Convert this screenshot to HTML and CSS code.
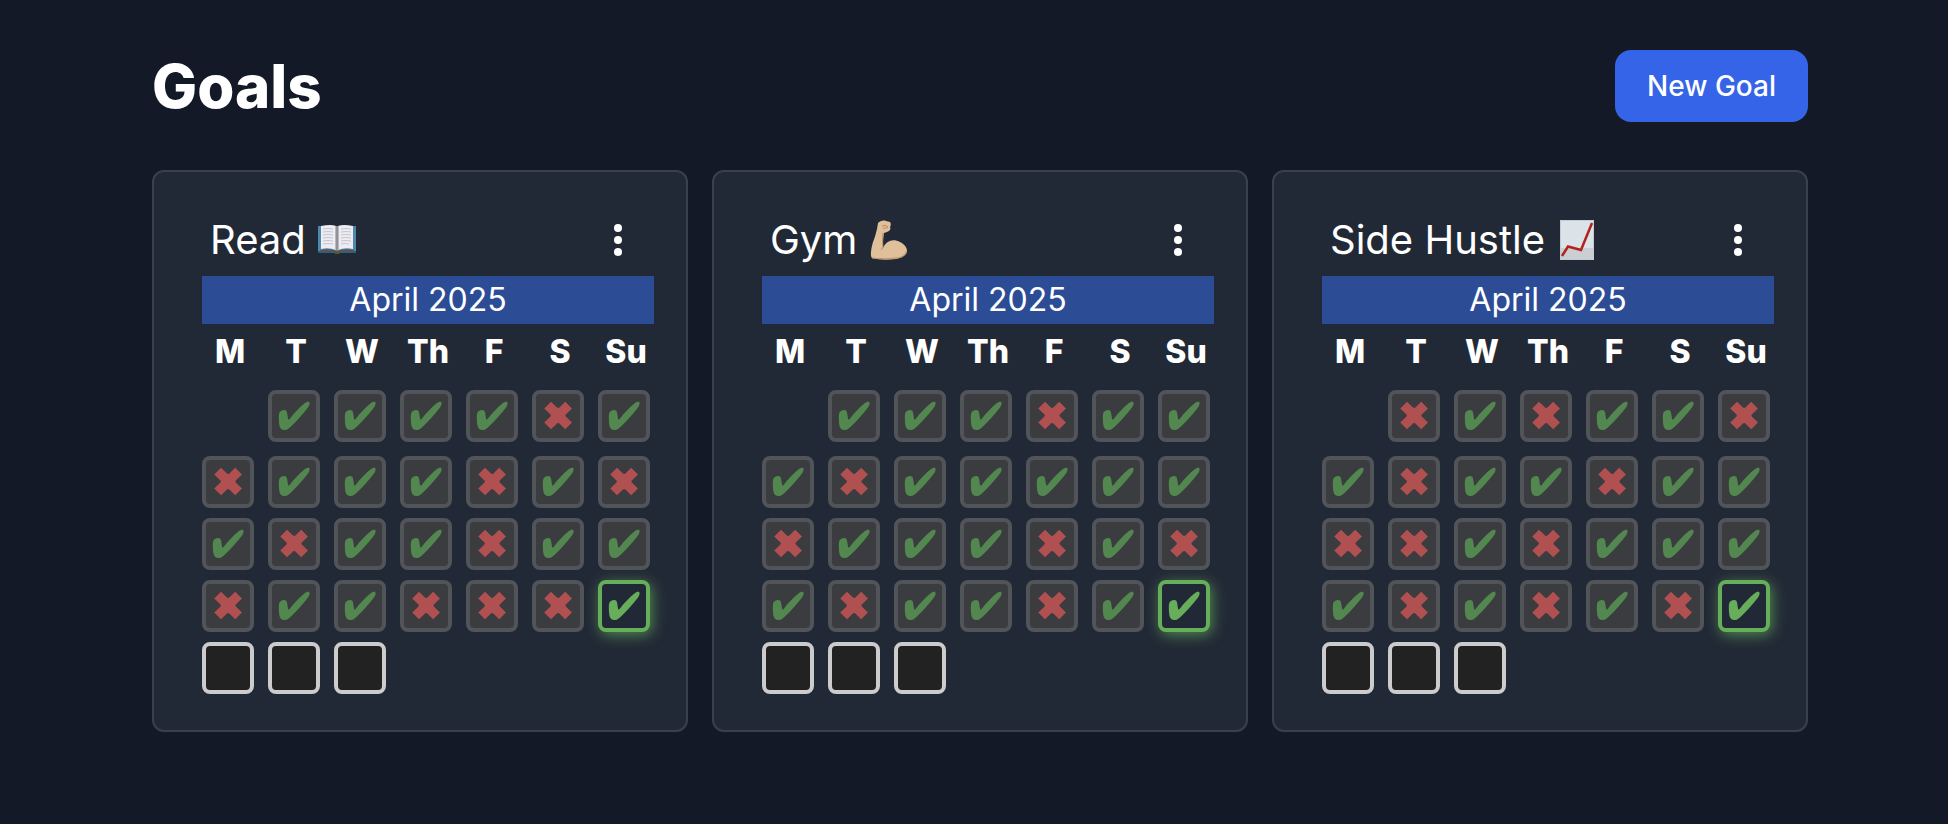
FILE: index.html
```html
<!DOCTYPE html>
<html lang="en">
<head>
  <meta charset="UTF-8">
  <title>Goals</title>
  <meta name="viewport" content="width=device-width, initial-scale=1">
  <link rel="stylesheet" href="styles.css">
</head>
<body>
  <svg class="sprite" aria-hidden="true">
    <symbol id="check" viewBox="0 0 44 44">
      <path d="M7 20C7.600 17 10 16 12 16C14 16 15 17 15.200 19.500L16 24.500C16.300 26 17 26 18 24.500C22 19 28 13 33 9C34.500 8 36.500 7.600 37.200 8C38 9 37.500 11.500 36 13.500C31 20 24.500 27.500 19 32.500C16 35.500 14 36 12.500 36C9.500 36 7.700 34 7.300 31C6.900 27.500 6.600 23 7 20Z"/>
    </symbol>
    <symbol id="cross" viewBox="0 0 44 44">
      <path d="M15 7.700L21 13.500Q22.200 14.300 23.400 13.500L29.200 7.700L36 14.400L29.800 20.500Q29 21.500 29.800 22.500L36 28.600L29.200 35.300L23.400 29.500Q22.200 28.700 21 29.500L15 35.300L8.200 28.600L14.500 22.500Q15.300 21.500 14.500 20.500L8.200 14.400Z"/>
    </symbol>
    <symbol id="dots" viewBox="0 0 8 32">
      <circle cx="4" cy="4" r="4"/>
      <circle cx="4" cy="16" r="4"/>
      <circle cx="4" cy="28" r="4"/>
    </symbol>
    <symbol id="book" viewBox="0 0 40 40">
      <path fill="#4d87ab" d="M0 6H38V33H0Z"/>
      <path fill="#2f5f80" d="M0 31H38V33H22L19 34L16 33H0Z"/>
      <path fill="#55565a" d="M2 30Q12 28 19 31Q26 28 36 30V32H22L19 33L16 32H2Z"/>
      <path fill="#ececf2" d="M3 6Q13 4 18 6V30Q11 27 3 29Z"/>
      <path fill="#ececf2" d="M35 6Q25 4 20 6V30Q27 27 35 29Z"/>
      <path fill="#b8b8c0" d="M17 6L19 7L21 6V29L19 31L17 29Z"/>
      <path fill="#6c6c72" d="M18.500 7H19.500V31H18.500Z"/>
      <path fill="none" stroke="#c6c6ce" d="M5 9Q10 8 15 9M5 12Q10 11 15 12M5 15Q10 14 15 15M5 18Q10 17 15 18M5 21Q10 20 15 21M5 24Q10 23 15 24M23 9Q28 8 33 9M23 12Q28 11 33 12M23 15Q28 14 33 15M23 18Q28 17 33 18M23 21Q28 20 33 21M23 24Q28 23 31 24"/>
      <path fill="#5b5a24" d="M16 31H22L21 34H17Z"/>
    </symbol>
    <symbol id="arm" viewBox="0 0 40 40">
      <path fill="#dfc09b" d="M9 3C11 1 14 0 17 1L21 2C22 3 22 5 21 7C22 9 21 11 18 12L15 13C14 18 14 23 14 28C17 21 24 18 31 22C35 24 38 27 38 31C38 35 33 38 27 39C19 40 10 40 3 38C1 36 2 29 4 22C6 17 7 13 8 9Z"/>
      <path fill="none" stroke="#b98c66" d="M3 38C10 39 20 39 27 38C32 38 36 35 37.500 31M12 30Q13 28 14 28M13 6Q16 4 19 7Q17 9 14 8M14 13Q13 22 14 28"/>
    </symbol>
    <symbol id="chart" viewBox="0 0 40 40">
      <path fill="#dbe2e8" d="M3 0H37V40H3Z"/>
      <path fill="#c9cfd2" d="M3 28H37V40H3Z"/>
      <path fill="none" stroke="#c3ccd4" d="M3.500 0.500H36.500V39.500H3.500Z"/>
      <path fill="none" stroke="#b3231d" stroke-width="2.500" d="M5 36L11 26.500L24 30L35 3"/>
    </symbol>
  </svg>

  <main class="container">
    <header class="page-header">
      <h1>Goals</h1>
      <button class="new-goal" type="button">New Goal</button>
    </header>
    <div class="goal-grid" id="goals"></div>
  </main>
  <script src="script.js"></script>
</body>
</html>
```

FILE: styles.css
```css
* {
  box-sizing: border-box;
}

body {
  margin: 0;
  min-height: 100vh;
  background: #131926;
  color: #fff;
  font-family: Inter, "Liberation Sans", sans-serif;
}

button {
  font-family: inherit;
  color: inherit;
  cursor: pointer;
}

.sprite {
  display: none;
}

.container {
  padding: 50px 140px 50px 152px;
}

.page-header {
  display: flex;
  align-items: center;
  justify-content: space-between;
  margin-bottom: 48px;
}

h1 {
  margin: 0;
  font-size: 60px;
  line-height: 72px;
  font-weight: 800;
}

.new-goal {
  padding: 0 32px;
  border: none;
  border-radius: 16px;
  background: #3564e9;
  font-size: 28px;
  line-height: 72px;
  font-weight: 500;
}

.goal-grid {
  display: grid;
  grid-template-columns: repeat(3, 1fr);
  gap: 24px;
}

.goal-card {
  padding: 36px 32px 36px 48px;
  border: 2px solid #3a404d;
  border-radius: 12px;
  background: #222936;
}

.goal-header {
  display: flex;
  align-items: center;
  justify-content: space-between;
  height: 64px;
  margin-bottom: 4px;
  padding: 0 32px 0 8px;
}

h2 {
  display: flex;
  align-items: center;
  gap: 12px;
  margin: 0;
  font-size: 40px;
  line-height: 48px;
  font-weight: 400;
}

.emoji {
  width: 40px;
  height: 40px;
}

.menu-button {
  display: flex;
  padding: 0;
  border: none;
  background: none;
}

.menu-button svg {
  width: 8px;
  height: 32px;
  fill: #fff;
}

.calendar {
  display: block;
}

.calendar caption {
  display: block;
  background: #2c4c96;
  font-size: 32px;
  line-height: 48px;
}

.calendar thead,
.calendar tbody {
  display: block;
}

.calendar tr {
  display: grid;
  grid-template-columns: repeat(7, 1fr);
  column-gap: 10px;
  margin-bottom: 10px;
}

.calendar tbody tr:first-child {
  margin-bottom: 14px;
}

.calendar tbody tr:last-child {
  margin-bottom: 0;
}

.calendar th {
  padding: 0;
  font-size: 32px;
  line-height: 56px;
  font-weight: 800;
}

.calendar td {
  height: 52px;
  padding: 0;
}

.day {
  display: block;
  width: 52px;
  height: 52px;
  padding: 0;
  border: 4px solid #ccc;
  border-radius: 8px;
  background: #222;
}

.day svg {
  display: block;
  width: 44px;
  height: 44px;
}

.day.done,
.day.missed {
  border-color: #515459;
  background: #3b3c40;
}

.done svg {
  fill: #52874f;
}

.missed svg {
  fill: #b05050;
}

.day.today {
  border-color: #67ae5b;
  background: #222936;
  box-shadow: 2px 3px 14px rgba(103, 174, 91, 0.7);
}

.today svg {
  fill: #67ae5b;
}
```

FILE: script.js
```js
const dayNames = ['M', 'T', 'W', 'Th', 'F', 'S', 'Su'];
const today = 27;

// One row per week: v = done, x = missed, o = upcoming, - = outside the month
const goals = [
  { name: 'Read', icon: 'book', weeks: ['-vvvvxv', 'xvvvxvx', 'vxvvxvv', 'xvvxxxv', 'ooo----'] },
  { name: 'Gym', icon: 'arm', weeks: ['-vvvxvv', 'vxvvvvv', 'xvvvxvx', 'vxvvxvv', 'ooo----'] },
  { name: 'Side Hustle', icon: 'chart', weeks: ['-xvxvvx', 'vxvvxvv', 'xxvxvvv', 'vxvxvxv', 'ooo----'] }
];

const states = {
  v: { className: 'done', icon: 'check' },
  x: { className: 'missed', icon: 'cross' },
  o: { className: 'upcoming', icon: '' }
};

function renderDay(mark, day) {
  if (mark === '-') {
    return '<td></td>';
  }
  const state = states[mark];
  const icon = state.icon ? `<svg><use href="#${state.icon}"/></svg>` : '';
  const current = day === today ? ' today' : '';
  return `<td><button type="button" class="day ${state.className}${current}" aria-label="April ${day}, ${state.className}">${icon}</button></td>`;
}

function renderGoal(goal) {
  let day = 0;
  const rows = goal.weeks.map(week => {
    const cells = [...week].map(mark => {
      // the first week starts on a blank Monday
      if (mark !== '-') day++;
      return renderDay(mark, day);
    });
    return `<tr>${cells.join('')}</tr>`;
  });

  return `
    <section class="goal-card">
      <div class="goal-header">
        <h2>${goal.name} <svg class="emoji"><use href="#${goal.icon}"/></svg></h2>
        <button class="menu-button" type="button" aria-label="${goal.name} options"><svg><use href="#dots"/></svg></button>
      </div>
      <table class="calendar">
        <caption>April 2025</caption>
        <thead><tr>${dayNames.map(name => `<th scope="col">${name}</th>`).join('')}</tr></thead>
        <tbody>${rows.join('')}</tbody>
      </table>
    </section>`;
}

document.getElementById('goals').innerHTML = goals.map(renderGoal).join('');
```
